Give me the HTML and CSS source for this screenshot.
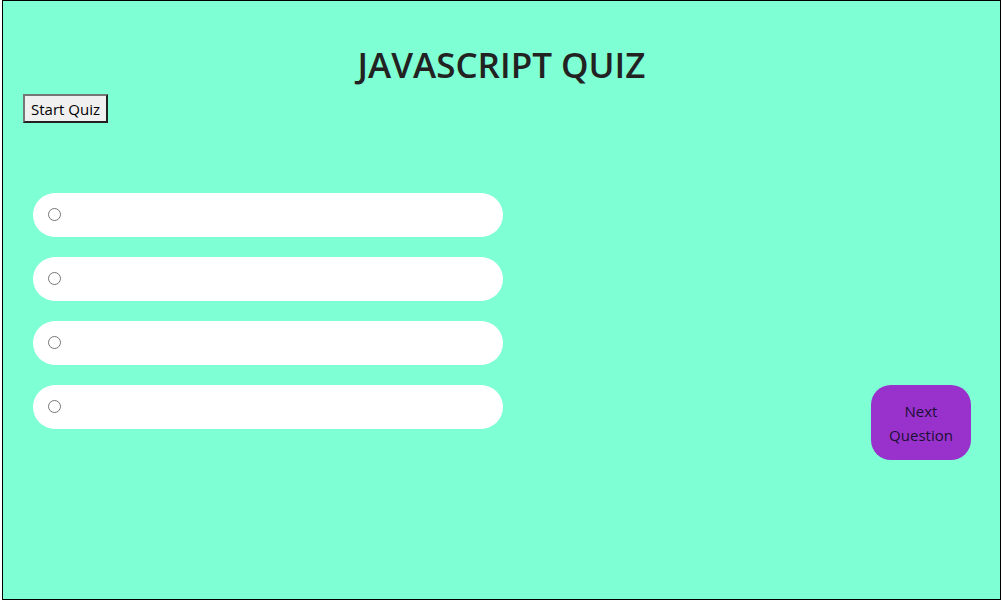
FILE: index.html
```html
<!DOCTYPE html>
<html>
<head>
<meta charset="utf-8">
<title>JavaScript Quiz</title>
<link rel="stylesheet" href="styles.css">
</head>
<body>
<div class="app">
  <h1 class="title">JAVASCRIPT QUIZ</h1>
  <button class="start-btn">Start Quiz</button>
  <div class="quiz">
    <div class="options">
      <label class="option"><input type="radio" name="ans"><span class="opt-text"></span></label>
      <label class="option"><input type="radio" name="ans"><span class="opt-text"></span></label>
      <label class="option"><input type="radio" name="ans"><span class="opt-text"></span></label>
      <label class="option"><input type="radio" name="ans"><span class="opt-text"></span></label>
    </div>
    <button class="next-btn">Next<br>Question</button>
  </div>
</div>
</body>
</html>
```

FILE: styles.css
```css
html, body {
  margin: 0;
  padding: 0;
  background: #fff;
}

body {
  font-family: "Open Sans", "Noto Sans", sans-serif;
}

.app {
  box-sizing: border-box;
  width: 999px;
  height: 600px;
  margin-left: 2px;
  border: 1px solid #000;
  background: #7fffd4;
  padding: 0 0 0 20px;
}

.title {
  margin: 0;
  padding-top: 39px;
  padding-right: 20px;
  text-align: center;
  font-size: 35px;
  font-weight: 600;
  color: #222;
  line-height: 50px;
  height: 53px;
}

.start-btn {
  display: block;
  margin-top: 1px;
  font-family: "Open Sans", "Noto Sans", sans-serif;
  font-size: 15px;
  color: #000;
  background: #f0f0f0;
  border: 2px outset #767676;
  padding: 0 4px;
  height: 29px;
  width: 85px;
}

.quiz {
  display: flex;
  justify-content: space-between;
  align-items: flex-start;
  margin-top: 70px;
  padding-left: 10px;
  padding-right: 29px;
}

.options {
  display: flex;
  flex-direction: column;
  gap: 20px;
}

.option {
  box-sizing: border-box;
  width: 470px;
  height: 44px;
  background: #fff;
  border-radius: 22px;
  display: flex;
  align-items: center;
  padding-left: 15px;
  padding-bottom: 2px;
}

.option input {
  margin: 0;
  width: 13px;
  height: 13px;
}

.next-btn {
  margin-top: 192px;
  width: 100px;
  height: 75px;
  border: none;
  border-radius: 20px;
  background: #9932cc;
  color: #1a1033;
  font-family: "Open Sans", "Noto Sans", sans-serif;
  font-size: 15px;
  line-height: 24px;
  padding: 0;
}
```
